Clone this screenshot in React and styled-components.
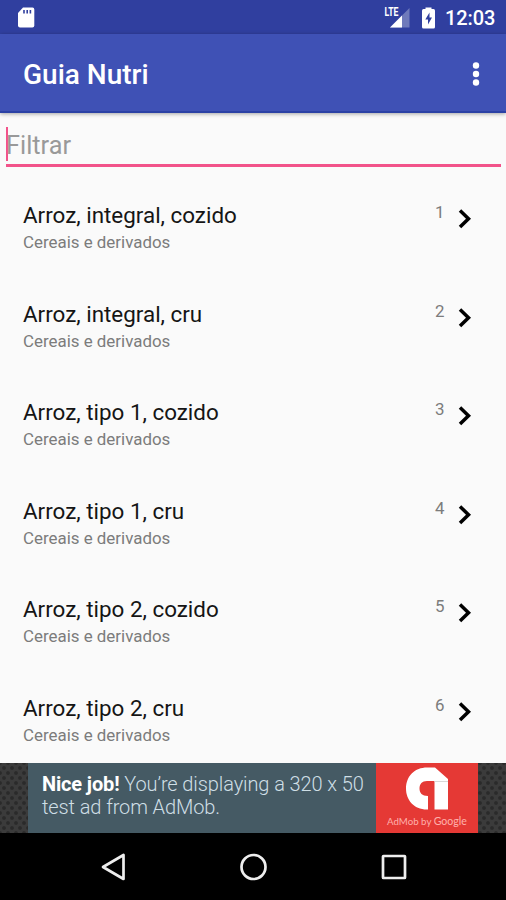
import React from "react";
import styled, { createGlobalStyle } from "styled-components";

const GlobalStyle = createGlobalStyle`
  *, *::before, *::after { box-sizing: border-box; }
  body { margin: 0; background: #fafafa; font-family: Roboto, "Liberation Sans", sans-serif; }
`;

const Screen = styled.div`
  width: 506px;
  height: 900px;
  display: flex;
  flex-direction: column;
  overflow: hidden;
  background: #fafafa;
`;

const StatusBar = styled.header`
  flex: none;
  height: 34px;
  display: flex;
  align-items: center;
  justify-content: space-between;
  padding: 0 11px 0 17px;
  background: #303f9f;
  color: #fff;
`;

const StatusIcons = styled.div`
  display: flex;
  align-items: center;
`;

const SignalIcon = styled.svg`
  overflow: visible;
`;

const BatteryIcon = styled.svg`
  margin: 1px 10px 0 12px;
`;

const Clock = styled.span`
  width: 50px;
  font-size: 20px;
  line-height: 34px;
  font-weight: 500;
  letter-spacing: -0.1px;
  padding-top: 2px;
`;

const AppBar = styled.div`
  flex: none;
  height: 79px;
  display: flex;
  align-items: center;
  justify-content: space-between;
  padding: 2px 25px 0 23px;
  background: #3f51b5;
  border-bottom: 2px solid #2b41a5;
  box-shadow: 0 1px 4px rgba(0, 0, 0, 0.35);
  z-index: 1;
`;

const Title = styled.h1`
  margin: 3px 0 0;
  color: #fff;
  font-size: 28px;
  line-height: 32px;
  font-weight: 500;
  white-space: nowrap;
`;

const Filter = styled.div`
  flex: none;
  height: 41px;
  display: flex;
  align-items: center;
  margin: 13px 5px 0 6px;
  border-bottom: 3px solid #f2538a;
`;

const Caret = styled.span`
  width: 2px;
  height: 34px;
  margin: 0 -2px 2px 0;
  background: #f2538a;
`;

const Placeholder = styled.span`
  color: #999;
  font-size: 25.3px;
  line-height: 34px;
  padding-top: 2px;
`;

const List = styled.main`
  flex: 1;
  min-height: 0;
  overflow: hidden;
  padding-top: 33px;
`;

const Row = styled.div`
  height: 98.5px;
  display: flex;
  align-items: flex-start;
  padding: 0 34px 0 23px;
`;

const RowText = styled.div`
  flex: 1;
`;

const Name = styled.div`
  color: #151515;
  font-size: 22.4px;
  line-height: 30px;
  white-space: nowrap;
`;

const Category = styled.div`
  color: #7c7c7c;
  font-size: 16.9px;
  line-height: 24px;
`;

const Index = styled.span`
  width: 10px;
  color: #7c7c7c;
  font-size: 16.9px;
  line-height: 22px;
  margin: 1px 13px 0 0;
`;

const Chevron = styled.svg`
  display: block;
  margin-top: 9px;
`;

const AdStrip = styled.aside`
  flex: none;
  height: 70px;
  display: flex;
  justify-content: center;
  background-color: #3b3b3b;
  background-image: radial-gradient(circle, #2a2a2a 1.4px, transparent 2.4px),
    radial-gradient(circle, #2a2a2a 1.4px, transparent 2.4px);
  background-size: 8px 10px;
  background-position: 0 0, 4px 5px;
`;

const AdCopy = styled.div`
  width: 348px;
  padding: 10px 0 0 14px;
  background: #455a64;
  color: #cfdfe6;
  font-size: 20px;
  line-height: 23px;
  font-weight: 300;
  letter-spacing: -0.1px;
  white-space: nowrap;
`;

const Strong = styled.strong`
  color: #fff;
  font-weight: 700;
  letter-spacing: -0.15px;
`;

const AdLogo = styled.div`
  width: 102px;
  display: flex;
  flex-direction: column;
  align-items: center;
  padding-top: 4px;
  background: #e53935;
`;

const LogoCaption = styled.span`
  margin-top: 3px;
  color: #ffb0ac;
  font-family: Lato, Roboto, sans-serif;
  font-size: 9.7px;
  line-height: 14px;
  white-space: nowrap;
`;

const Google = styled.span`
  font-size: 10.6px;
`;

const NavBar = styled.nav`
  flex: none;
  height: 67px;
  display: flex;
  align-items: center;
  justify-content: space-between;
  padding: 0 97px 0 99px;
  background: #000;
`;

const foods = [
  "Arroz, integral, cozido",
  "Arroz, integral, cru",
  "Arroz, tipo 1, cozido",
  "Arroz, tipo 1, cru",
  "Arroz, tipo 2, cozido",
  "Arroz, tipo 2, cru",
];

export default function App() {
  return (
    <>
      <GlobalStyle />
      <Screen>
        <StatusBar>
          <svg width="18" height="21" viewBox="0 0 18 21">
            <path d="M6 0.5H15.5Q17.3 0.5 17.3 2.5V18.5Q17.3 20.5 15.3 20.5H3Q1 20.5 1 18.5V6Z" fill="#fff" />
            <path d="M7 3v3.4M10.2 3v3.4M13.4 3v3.4" stroke="#303f9f" strokeWidth="1.6" />
          </svg>
          <StatusIcons>
            <SignalIcon width="26" height="22" viewBox="0 0 26 22">
              <path d="M25.5 2V21.5H6Z" fill="#6f7abb" />
              <path d="M18 9.5V21.5H6Z" fill="#fff" />
              <path d="M0 0H15.5V11H0Z" fill="#303f9f" />
              <text x="0.5" y="10.3" textLength="14" lengthAdjust="spacingAndGlyphs" fill="#fff" fontFamily="Roboto" fontWeight="700" fontSize="12.5">LTE</text>
            </SignalIcon>
            <BatteryIcon width="13" height="22" viewBox="0 0 13 22">
              <path d="M3.5 2V0.5h6V2h2Q13 2 13 3.7V20q0 1.5-1.5 1.5h-10Q0 21.5 0 20V3.7Q0 2 1.5 2Z" fill="#fff" />
              <path d="M7.5 5.5 3.3 12.5H6V17.5L10 10.5H7.5Z" fill="#303f9f" />
            </BatteryIcon>
            <Clock>12:03</Clock>
          </StatusIcons>
        </StatusBar>
        <AppBar>
          <Title>Guia Nutri</Title>
          <svg width="10" height="26" viewBox="0 0 10 26" fill="#fff">
            <circle cx="5" cy="4.5" r="3.2" />
            <circle cx="5" cy="13" r="3.2" />
            <circle cx="5" cy="21.5" r="3.2" />
          </svg>
        </AppBar>
        <Filter>
          <Caret />
          <Placeholder>Filtrar</Placeholder>
        </Filter>
        <List>
          {foods.map((name, i) => (
            <Row key={name}>
              <RowText>
                <Name>{name}</Name>
                <Category>Cereais e derivados</Category>
              </RowText>
              <Index>{i + 1}</Index>
              <Chevron width="14" height="20" viewBox="0 0 14 20">
                <path d="M2 1.5 10.5 9.7 2 18" fill="none" stroke="#000" strokeWidth="3.5" />
              </Chevron>
            </Row>
          ))}
        </List>
        <AdStrip>
          <AdCopy>
            <div><Strong>Nice job!</Strong> You’re displaying a 320 x 50</div>
            <div>test ad from AdMob.</div>
          </AdCopy>
          <AdLogo>
            <svg width="44" height="44" viewBox="0 0 44 44">
              <path d="M23 42.5C9 43 1 33 1 21.5 1 9 10 0.5 22 0.5H30L43 12V42.5H29.5V14H22C17 14 14.5 17 14.5 21.5 14.5 26 17 29 23 29Z" fill="#fff" />
              <path d="M29.5 14.5H43" stroke="#d8d8d8" strokeWidth="1" />
            </svg>
            <LogoCaption>AdMob by <Google>Google</Google></LogoCaption>
          </AdLogo>
        </AdStrip>
        <NavBar>
          <svg width="30" height="30" viewBox="0 0 30 30">
            <path d="M24.5 3V27L4 15Z" fill="none" stroke="#eee" strokeWidth="2.7" strokeLinejoin="round" />
          </svg>
          <svg width="30" height="30" viewBox="0 0 30 30">
            <circle cx="14.5" cy="15" r="12" fill="none" stroke="#eee" strokeWidth="2.7" />
          </svg>
          <svg width="30" height="30" viewBox="0 0 30 30">
            <rect x="4" y="4" width="22" height="22" rx="0.5" fill="none" stroke="#eee" strokeWidth="2.7" />
          </svg>
        </NavBar>
      </Screen>
    </>
  );
}
